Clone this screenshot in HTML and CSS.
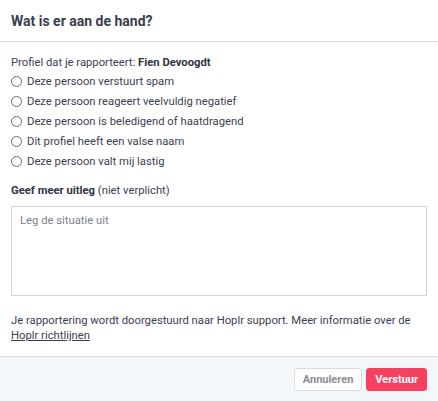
FILE: index.html
```html
<!DOCTYPE html>
<html lang="nl">
<head>
<meta charset="utf-8">
<link rel="stylesheet" href="styles.css">
</head>
<body>
<div class="modal">
  <div class="header"><h1 class="title">Wat is er aan de hand?</h1></div>
  <div class="body">
    <p class="profile">Profiel dat je rapporteert: <strong>Fien Devoogdt</strong></p>
    <ul class="options">
      <li class="option"><span class="radio"></span>Deze persoon verstuurt spam</li>
      <li class="option"><span class="radio"></span>Deze persoon reageert veelvuldig negatief</li>
      <li class="option"><span class="radio"></span>Deze persoon is beledigend of haatdragend</li>
      <li class="option"><span class="radio"></span>Dit profiel heeft een valse naam</li>
      <li class="option"><span class="radio"></span>Deze persoon valt mij lastig</li>
    </ul>
    <p class="label"><strong>Geef meer uitleg</strong> (niet verplicht)</p>
    <div class="textarea">Leg de situatie uit</div>
    <p class="info">Je rapportering wordt doorgestuurd naar Hoplr support. Meer informatie over de <a class="link">Hoplr richtlijnen</a></p>
  </div>
  <div class="footer">
    <button class="btn btn-cancel">Annuleren</button>
    <button class="btn btn-send">Verstuur</button>
  </div>
</div>
</body>
</html>
```
FILE: styles.css
```css
* { box-sizing: border-box; }
html, body { margin: 0; padding: 0; background: #fff; }
body { font-family: Roboto, "Liberation Sans", sans-serif; color: #3c4150; font-size: 11.25px; }
.modal { width: 438px; height: 401px; display: flex; flex-direction: column; }
.header { height: 42px; border-bottom: 1px solid #d6d8dc; padding: 0 11px; display: flex; align-items: center; }
.title { margin: 0; font-size: 14px; font-weight: 700; color: #393e50; }
.body { flex: 1; padding: 14px 11px 0; }
.profile { margin: 0 0 1px; line-height: 14px; }
.profile strong { font-weight: 700; color: #2f3444; }
.options { list-style: none; margin: 0; padding: 0; }
.option { display: flex; align-items: center; height: 20px; }
.radio { width: 11px; height: 11px; border: 1px solid #666a74; border-radius: 50%; margin-right: 5px; }
.label { margin: 13px 0 8px; line-height: 14px; }
.label strong { color: #2f3444; }
.textarea { height: 90px; border: 1px solid #d3d5d9; padding: 7px 8px; color: #7d818a; }
.info { margin: 17px 0 0; line-height: 15px; }
.link { color: #3c4150; text-decoration: underline; }
.footer { height: 45px; background: #f4f7fa; border-top: 1px solid #d6d8dc; display: flex; justify-content: flex-end; align-items: center; gap: 4px; padding: 0 11px 0 0; }
.btn { font-family: Roboto, "Liberation Sans", sans-serif; font-size: 11px; font-weight: 700; height: 23px; border-radius: 3px; padding: 0 8px; }
.btn-cancel { background: #fff; border: 1px solid #dcdde0; color: #8a8d94; }
.btn-send { background: #f5415f; border: 1px solid #f5415f; color: #fff; }
```
